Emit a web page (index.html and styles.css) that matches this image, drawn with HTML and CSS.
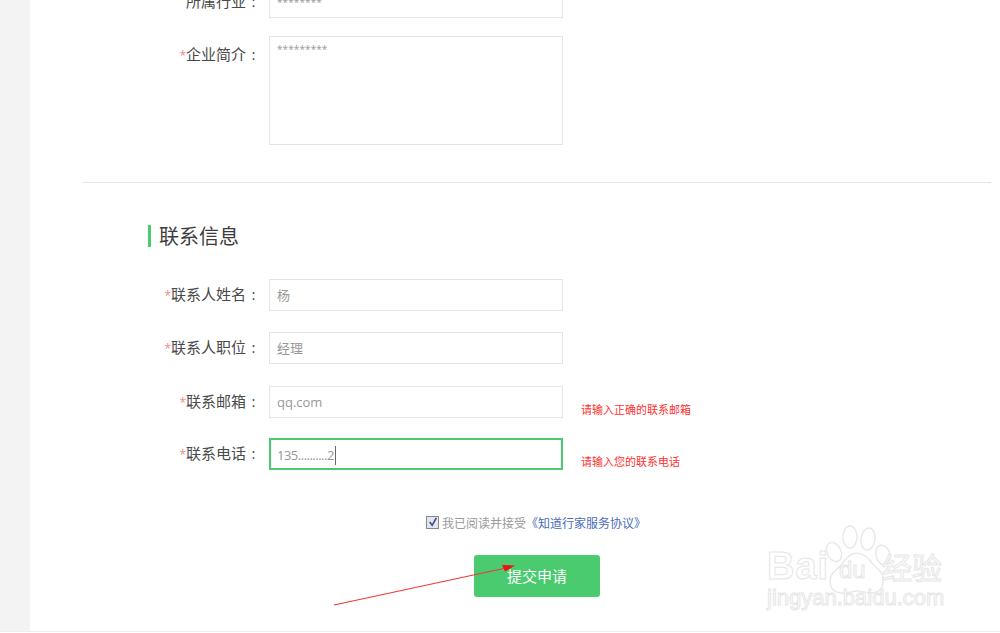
FILE: index.html
```html
<!DOCTYPE html>
<html lang="zh-CN">
<head>
<meta charset="utf-8">
<title>联系信息</title>
<link rel="stylesheet" href="styles.css">
</head>
<body>
<div class="page">
  <aside class="rail"></aside>
  <main class="main">
    <form class="form">
      <section class="block block-company">
        <div class="row row-first">
          <label class="label">所属行业<span class="colon">:</span></label>
          <div class="field"><span class="ph stars">********</span></div>
        </div>
        <div class="row row-area">
          <label class="label"><i class="star">*</i>企业简介<span class="colon">:</span></label>
          <div class="field area"><span class="ph stars">*********</span></div>
        </div>
      </section>
      <section class="block block-contact">
        <h2 class="heading">联系信息</h2>
        <div class="row">
          <label class="label"><i class="star">*</i>联系人姓名<span class="colon">:</span></label>
          <div class="field"><span class="ph">杨</span></div>
        </div>
        <div class="row row-job">
          <label class="label"><i class="star">*</i>联系人职位<span class="colon">:</span></label>
          <div class="field"><span class="ph">经理</span></div>
        </div>
        <div class="row row-mail">
          <label class="label"><i class="star">*</i>联系邮箱<span class="colon">:</span></label>
          <div class="field"><span class="ph">qq.com</span></div>
          <span class="error">请输入正确的联系邮箱</span>
        </div>
        <div class="row">
          <label class="label"><i class="star">*</i>联系电话<span class="colon">:</span></label>
          <div class="field focus"><span class="ph tight">135..........2</span><span class="caret"></span></div>
          <span class="error">请输入您的联系电话</span>
        </div>
        <div class="agree">
          <span class="check"><svg viewBox="0 0 12 12" width="10" height="10"><path d="M2 6l3 4 5-9" fill="none" stroke="#3d4f8f" stroke-width="2"/></svg></span>
          <span class="agree-text">我已阅读并接受</span><a class="link">《知道行家服务协议》</a>
        </div>
        <div class="submit-row"><button type="button" class="submit">提交申请</button></div>
      </section>
    </form>
  </main>
</div>

<svg class="arrow" width="200" height="50" viewBox="0 0 200 50">
  <path d="M4 45L176 8" stroke="#f0383c" stroke-width="1.1" fill="none"/>
  <path d="M185 5.5L172 5L175 11.5Z" fill="#f01010"/>
</svg>

<div class="mark">
  <svg class="paw" width="70" height="80" viewBox="0 0 70 80">
    <g fill="#fff" stroke="#e9e9e9" stroke-width="1.5">
      <ellipse cx="9" cy="28" rx="7" ry="10" transform="rotate(-25 9 28)"/>
      <ellipse cx="25" cy="13" rx="7" ry="11"/>
      <ellipse cx="43" cy="15" rx="7" ry="11" transform="rotate(8 43 15)"/>
      <ellipse cx="58" cy="31" rx="7" ry="10" transform="rotate(-15 58 31)"/>
      <path d="M32 29c9 0 13 9 20 15 9 7 9 24-5 25-6 0-10-2-15-2s-9 3-16 2C3 68 2 53 11 46c8-6 11-17 21-17Z"/>
    </g>
  </svg>
  <span class="mark-bai">Bai</span>
  <span class="mark-du">du</span>
  <span class="mark-cn">经验</span>
  <span class="mark-url">jingyan.baidu.com</span>
</div>
</body>
</html>
```
FILE: styles.css
```css
* { box-sizing: border-box; }
html, body { margin: 0; padding: 0; }
body {
  width: 1000px;
  height: 633px;
  overflow: hidden;
  position: relative;
  background: #fff;
  font-family: "Noto Sans CJK SC", "Open Sans", sans-serif;
  color: #444;
}
.page { display: flex; height: 632px; border-bottom: 1px solid #eee; }
.rail { width: 30px; flex: none; background: #f3f3f3; }
.main { flex: 1; overflow: hidden; }
.form { width: 908px; margin-left: 53px; margin-top: -14px; }
.block-company { height: 197px; border-bottom: 1px solid #e4e4e4; }
.row { display: flex; align-items: flex-start; height: 32px; margin-bottom: 21px; }
.row-first { margin-bottom: 18px; }
.row-area { height: 109px; margin-bottom: 0; }
.row-area .label { padding-top: 8px; }
.row-job { margin-bottom: 22px; }
.row-mail { margin-bottom: 20px; }
.label {
  width: 178px;
  flex: none;
  margin-right: 8px;
  padding-top: 5px;
  text-align: right;
  font-size: 15px;
  line-height: 20px;
  color: #4a4a4a;
  white-space: nowrap;
}
.colon { display: inline-block; width: 15px; text-align: center; font-family: "Open Sans", sans-serif; }
.star { color: #f08a8a; font-style: normal; font-family: "Open Sans", sans-serif; font-size: 12px; }
.field {
  width: 294px;
  height: 32px;
  flex: none;
  padding: 0 7px;
  display: flex;
  align-items: center;
  background: #fff;
  border: 1px solid #e4e4e4;
  font-size: 13px;
  color: #999;
  font-family: "Open Sans", "Noto Sans CJK SC", sans-serif;
}
.area { height: 109px; align-items: flex-start; padding-top: 2px; }
.ph { line-height: 20px; }
.stars { font-size: 10px; letter-spacing: 0.1px; }
.tight { letter-spacing: -0.5px; }
.focus { border: 2px solid #4bcb70; padding: 2px 6px 0; }
.caret { width: 1px; height: 19px; margin-left: 1px; background: #666; }
.error {
  margin: 16px 0 0 18px;
  font-size: 11px;
  line-height: 15px;
  color: #ff3030;
  white-space: nowrap;
}
.block-contact { height: 460px; padding-top: 42px; }
.heading {
  display: flex;
  align-items: center;
  height: 22px;
  margin: 0 0 32px 65px;
  padding-left: 8px;
  border-left: 3px solid #4bcb70;
  font-size: 20px;
  line-height: 22px;
  font-weight: 400;
  color: #3c3c3c;
}
.agree {
  display: flex;
  align-items: center;
  height: 18px;
  margin: 43px 0 0 343px;
  font-size: 12px;
  color: #999;
}
.check {
  width: 13px;
  height: 13px;
  margin-right: 3px;
  display: flex;
  align-items: center;
  justify-content: center;
  background: #e4e6ee;
  border: 1px solid #8a8a8a;
}
.link { color: #4a6cb8; }
.submit-row { margin: 24px 0 0 391px; }
.submit {
  width: 126px;
  height: 42px;
  padding: 0;
  border: 0;
  border-radius: 3px;
  background: #4bcb70;
  color: #fff;
  font: 15px/42px "Noto Sans CJK SC", sans-serif;
}
.arrow { position: absolute; left: 330px; top: 560px; }
.mark { position: absolute; left: 0; top: 0; width: 1000px; height: 633px; pointer-events: none; }
.paw { position: absolute; left: 825px; top: 524px; }
.mark-bai, .mark-du, .mark-cn, .mark-url {
  position: absolute;
  color: #fff;
  -webkit-text-stroke: 1px #e6e6e6;
  font-family: "Liberation Sans", sans-serif;
  line-height: 1;
  white-space: nowrap;
}
.mark-bai { left: 767px; top: 547px; font-size: 38px; font-weight: 700; letter-spacing: 1px; }
.mark-du { left: 839px; top: 558px; font-size: 24px; }
.mark-cn { left: 882px; top: 551px; font-size: 30px; font-family: "Noto Sans CJK SC", sans-serif; }
.mark-url { left: 767px; top: 587px; font-size: 22px; }
```
